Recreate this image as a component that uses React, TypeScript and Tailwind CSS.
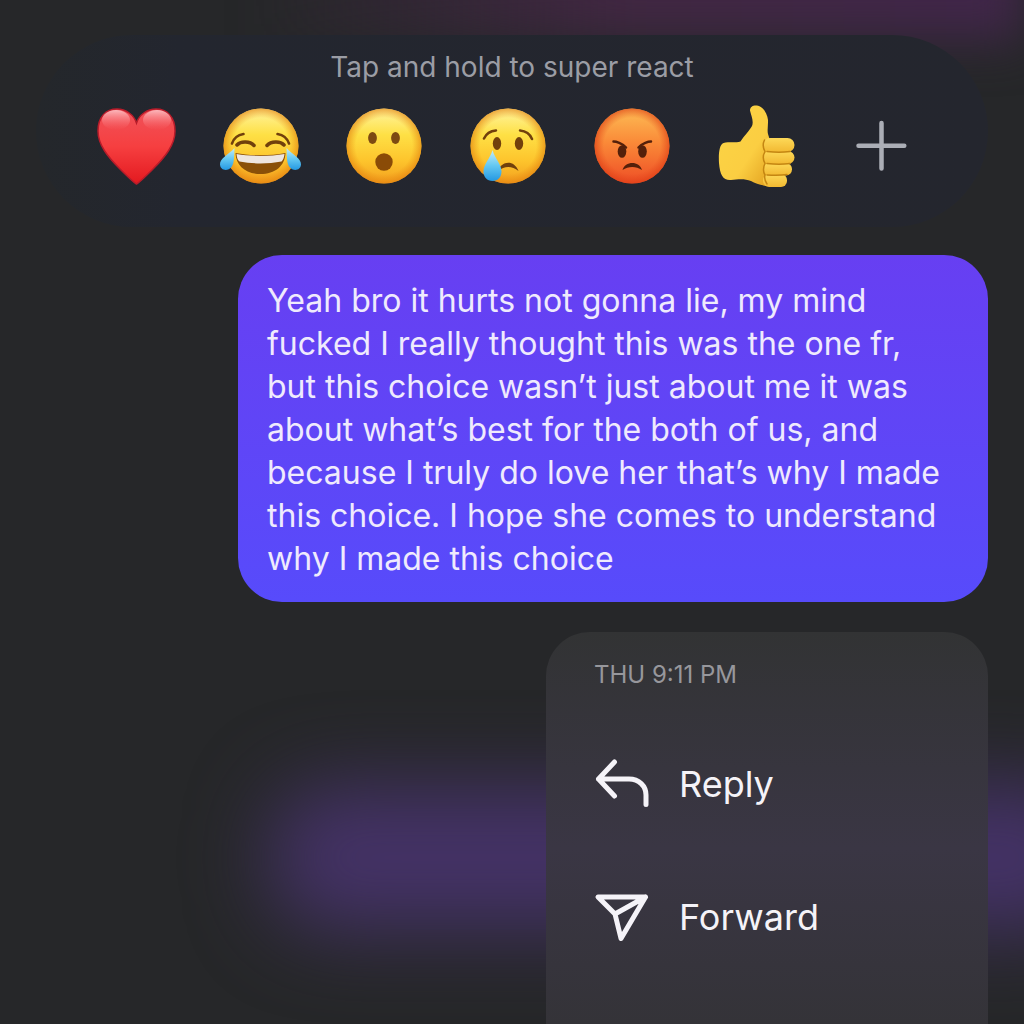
import React from 'react';

const BROWN = '#71400c';

function FaceBase() {
  return (
    <>
      <circle cx="40" cy="40" r="37.5" fill="url(#face)" />
      <circle cx="40" cy="40" r="37.5" fill="url(#faceEdge)" />
    </>
  );
}

function Heart() {
  return (
    <svg viewBox="0 0 80 80" className="size-20" aria-hidden="true">
      <path
        d="M40.500 78C37 76 31 70 24 63C12 51 2 39 2 25C2 11 10 3 21 3C30 3 38 9 40.500 17C43 9 51 3 60 3C71 3 79 11 79 25C79 39 69 51 57 63C50 70 44 76 40.500 78Z"
        fill="url(#heart)"
        stroke="#b81c2a"
        strokeWidth="1.5"
      />
      <ellipse cx="20" cy="14" rx="14" ry="10" fill="url(#shine)" />
      <ellipse cx="61" cy="14" rx="14" ry="10" fill="url(#shine)" />
    </svg>
  );
}

function Laugh() {
  return (
    <svg viewBox="0 0 80 80" className="size-20 overflow-visible" aria-hidden="true">
      <circle cx="41" cy="40" r="37.5" fill="url(#face)" />
      <circle cx="41" cy="40" r="37.5" fill="url(#faceEdge)" />
      <g fill="none" stroke={BROWN} strokeLinecap="round">
        <path d="M12 37.5C13.500 33 17.500 29 23.500 28M69 37.500C67.500 33 63.500 29 57.500 28" strokeWidth="2.5" />
        <path d="M17 39C20.500 35 30 35 34 39.500M47 39.500C51 35 60.500 35 64 39" strokeWidth="3.5" />
      </g>
      <path d="M15.500 47C31 50 50 50 65.500 47C65 60 55 68 40.500 68C26 68 16 60 15.500 47Z" fill="#8a5008" />
      <path d="M16.500 48C31 50.500 50 50.500 64.500 48C64 52 63 54 61.500 55.500C48 58 33 58 19.500 55.500C17.500 54 17 52 16.500 48Z" fill="#eee6e0" />
      <path d="M14.500 42C14 50 14.500 57 11.500 61C8 65.500 0.500 65 0 58.500C-.3 52 8.500 49 14.500 42Z" fill="url(#tear)" />
      <path d="M66.500 42C67 50 66.500 57 69.500 61C73 65.500 80.500 65 81 58.500C81.300 52 72.500 49 66.500 42Z" fill="url(#tear)" />
    </svg>
  );
}

function Wow() {
  return (
    <svg viewBox="0 0 80 80" className="size-20" aria-hidden="true">
      <FaceBase />
      <ellipse cx="28.5" cy="32" rx="4.4" ry="6" fill="#7d4a12" />
      <ellipse cx="51.5" cy="32" rx="4.4" ry="6" fill="#7d4a12" />
      <circle cx="40" cy="56" r="8.7" fill="#8a4b07" />
    </svg>
  );
}

function Sad() {
  return (
    <svg viewBox="0 0 80 80" className="size-20" aria-hidden="true">
      <FaceBase />
      <ellipse cx="29" cy="37.5" rx="4.2" ry="6.5" fill={BROWN} />
      <ellipse cx="51" cy="37.5" rx="4.2" ry="6.5" fill={BROWN} />
      <path
        d="M16 32.500C18 28 22 25 28 24.500M52 24.500C58 25 62 28 64 33"
        fill="none"
        stroke={BROWN}
        strokeWidth="2.5"
        strokeLinecap="round"
      />
      <path d="M30 65C33 55 46 53 50.500 65C44 60 37 59.500 30 65Z" fill={BROWN} />
      <path d="M24.500 44C27 53 33.500 58 33.500 65.500C33.500 71 30 75 24.500 75C19 75 15.500 71 15.500 65.500C15.500 58 22 53 24.500 44Z" fill="url(#tear)" />
    </svg>
  );
}

function Angry() {
  return (
    <svg viewBox="0 0 80 80" className="size-20" aria-hidden="true">
      <circle cx="40" cy="40" r="37.5" fill="url(#angry)" />
      <circle cx="40" cy="40" r="37.5" fill="url(#angryEdge)" />
      <ellipse cx="30" cy="45.5" rx="4.3" ry="6.3" fill="#54200a" />
      <ellipse cx="50.5" cy="45.5" rx="4.3" ry="6.3" fill="#54200a" />
      <path
        d="M21.500 35.500C24 35.500 30 37 34 41.500M59 35.500C56.500 35.500 50.500 37 46.500 41.500"
        fill="none"
        stroke="#54200a"
        strokeWidth="2.5"
        strokeLinecap="round"
      />
      <path d="M30.500 64C33 54.500 47.500 54.500 50 64C44 60 36.500 60 30.500 64Z" fill="#54200a" />
    </svg>
  );
}

function ThumbsUp() {
  return (
    <svg viewBox="0 0 80 80" className="size-20 overflow-visible" aria-hidden="true">
      <path
        d="M7.500 37C13 35.500 20 37 24.500 35.500C28 30 34 24 36 20C38 15 35 9 34 4.500C34 0 38 -1 41 -.5C47 0 51.500 8 52 14C52.300 19 51 24 52 28L57 44L57 79C49 81.500 41 78 35 75C28 72 21 73.500 15 74C7 74.500 4 69 3 57C2.500 49 3 38.500 7.500 37Z"
        fill="url(#hand)"
      />
      <g fill="url(#finger)">
        <rect x="47" y="68" width="24" height="13" rx="6" />
        <rect x="47" y="57" width="29" height="12.5" rx="6" />
        <rect x="47" y="45" width="31.5" height="13" rx="6.5" />
        <rect x="47" y="32" width="31.5" height="14" rx="7" />
      </g>
      <path
        d="M51 45.500C59 46.500 67 46.500 74 45.500M51 57.500C59 58.500 67 58.500 74 57.500M51 69C59 69.500 65 69.500 71 68.500M48.500 34C46.500 38 47 42 49 45.500C47 49 47 54 49 57.500C47 61 47 66 49 69C48 72 49 75 51 78"
        fill="none"
        stroke="#c48612"
        strokeWidth="1.5"
        strokeLinecap="round"
      />
    </svg>
  );
}

function Plus() {
  return (
    <svg viewBox="0 0 80 80" className="size-20" fill="none" stroke="#abaeb6" strokeWidth="4.5" strokeLinecap="round" aria-hidden="true">
      <path d="M41.500 17V62.500M18.500 39.700H64.300" />
    </svg>
  );
}

// Gradients shared by all the emoji
function EmojiDefs() {
  return (
    <svg className="absolute size-0" aria-hidden="true">
      <defs>
        <linearGradient id="face" x1="0" y1="0" x2="0" y2="1">
          <stop offset="0" stopColor="#fff4a0" />
          <stop offset=".35" stopColor="#fee045" />
          <stop offset=".7" stopColor="#fdc42c" />
          <stop offset="1" stopColor="#f39f1f" />
        </linearGradient>
        <radialGradient id="faceEdge">
          <stop offset=".75" stopColor="#e98a10" stopOpacity="0" />
          <stop offset="1" stopColor="#e2810f" stopOpacity=".65" />
        </radialGradient>
        <linearGradient id="heart" x1="0" y1="0" x2="0" y2="1">
          <stop offset="0" stopColor="#f0525a" />
          <stop offset=".5" stopColor="#f63f40" />
          <stop offset="1" stopColor="#e3191f" />
        </linearGradient>
        <linearGradient id="shine" x1="0" y1="0" x2="0" y2="1">
          <stop offset="0" stopColor="#ffd9dc" stopOpacity=".75" />
          <stop offset="1" stopColor="#ff7a7e" stopOpacity="0" />
        </linearGradient>
        <linearGradient id="tear" x1="0" y1="0" x2="0" y2="1">
          <stop offset="0" stopColor="#c4ecf7" />
          <stop offset=".5" stopColor="#64c8f2" />
          <stop offset="1" stopColor="#2498e2" />
        </linearGradient>
        <linearGradient id="angry" x1="0" y1="0" x2="0" y2="1">
          <stop offset="0" stopColor="#fdbd55" />
          <stop offset=".45" stopColor="#fa8a38" />
          <stop offset="1" stopColor="#ee4e26" />
        </linearGradient>
        <radialGradient id="angryEdge">
          <stop offset=".75" stopColor="#e2461a" stopOpacity="0" />
          <stop offset="1" stopColor="#dd3d14" stopOpacity=".65" />
        </radialGradient>
        <linearGradient id="hand" x1="0" y1="0" x2="1" y2="1">
          <stop offset="0" stopColor="#fbd545" />
          <stop offset=".6" stopColor="#fbce42" />
          <stop offset="1" stopColor="#e09d1c" />
        </linearGradient>
        <linearGradient id="finger" x1="0" y1="0" x2="0" y2="1">
          <stop offset="0" stopColor="#fdd958" />
          <stop offset="1" stopColor="#f2b932" />
        </linearGradient>
      </defs>
    </svg>
  );
}

const reactions = [
  { label: 'Love', Icon: Heart },
  { label: 'Laugh', Icon: Laugh },
  { label: 'Wow', Icon: Wow },
  { label: 'Sad', Icon: Sad },
  { label: 'Angry', Icon: Angry },
  { label: 'Like', Icon: ThumbsUp },
  { label: 'More reactions', Icon: Plus },
];

const actions = [
  { label: 'Reply', path: 'M21.500 6L5.500 23L21.500 40M5.500 23H36C46 23 53 30 53 39V48.500' },
  { label: 'Forward', path: 'M5 8H52.500L28 49.500L22 25ZM22 25L52.500 8' },
];

export default function App() {
  return (
    <main className="relative flex h-screen flex-col overflow-hidden bg-[#262729] px-9 pt-[35px] font-['Inter',sans-serif]">
      <EmojiDefs />

      {/* Blurred chat behind the overlay */}
      <div className="absolute inset-x-0 -top-14 h-24 bg-linear-to-r from-transparent from-25% via-[#412742] via-60% to-[#41264a] blur-xl" />
      <div className="absolute top-[785px] -right-20 left-[270px] h-[145px] rounded-[60px] bg-[#443266] blur-[40px]" />

      {/* Reactions */}
      <section className="relative flex h-48 shrink-0 flex-col rounded-full bg-linear-to-r from-[#24272b] via-[#23262f] via-15% to-[#24262e] pt-4 pr-17 pl-15">
        <p className="-mr-2 text-center text-[28px] leading-8 text-[#9b9da5]">Tap and hold to super react</p>
        <div className="mt-[23px] flex justify-between">
          {reactions.map(({ label, Icon }) => (
            <button key={label} type="button" aria-label={label} className="size-20">
              <Icon />
            </button>
          ))}
        </div>
      </section>

      {/* Message */}
      <p className="relative mt-7 w-[750px] max-w-full shrink-0 self-end rounded-[44px] bg-linear-to-b from-[#673ff2] to-[#574bfb] px-[29px] pt-6 pb-[22px] text-[32px] leading-[43px] text-[#efeafd]">
        Yeah bro it hurts not gonna lie, my mind fucked I really thought this was the one fr, but this choice wasn’t just about me it was about what’s best for the both of us, and because I truly do love her that’s why I made this choice. I hope she comes to understand why I made this choice
      </p>

      {/* Context menu */}
      <section className="relative mt-[30px] flex w-[442px] grow flex-col self-end rounded-t-[44px] bg-linear-to-b from-[#323334] via-[#3a3644] via-55% to-[#343338] pt-[27px]">
        <time className="pl-12 text-2xl text-[#97979c]">THU 9:11 PM</time>
        <div className="mt-[26px] flex flex-col">
          {actions.map((action) => (
            <button key={action.label} type="button" className="flex h-[133px] items-center gap-[30px] pl-[47px] text-left text-4xl text-[#f5f3f8]">
              <svg viewBox="0 0 56 56" className="size-14" fill="none" stroke="currentColor" strokeWidth="5" strokeLinecap="round" strokeLinejoin="round" aria-hidden="true">
                <path d={action.path} />
              </svg>
              {action.label}
            </button>
          ))}
        </div>
      </section>
    </main>
  );
}
